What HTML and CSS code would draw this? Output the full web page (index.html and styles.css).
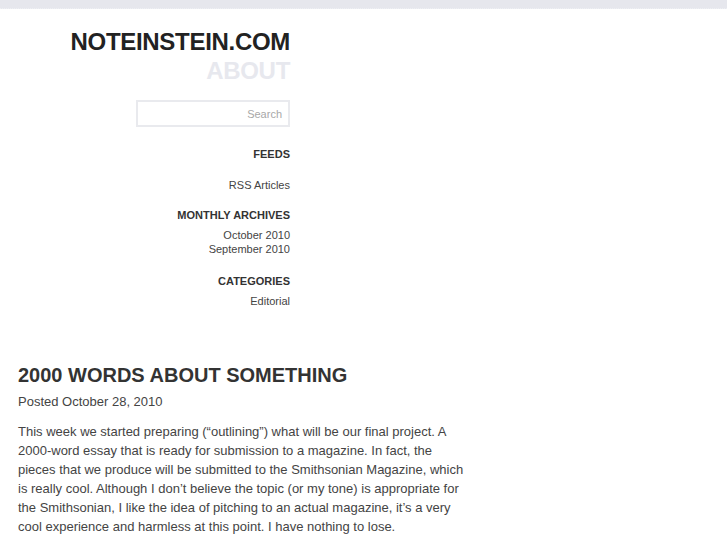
FILE: index.html
```html
<!DOCTYPE html>
<html>
<head>
<meta charset="utf-8">
<title>noteinstein.com</title>
<link rel="stylesheet" href="styles.css">
</head>
<body>
<div class="topbar"></div>
<aside class="sidebar">
  <h1 class="site-title">NOTEINSTEIN.COM</h1>
  <div class="about">ABOUT</div>
  <div class="search"><span class="search-ph">Search</span></div>
  <h3 class="sec feeds">FEEDS</h3>
  <ul class="list list-feeds"><li>RSS Articles</li></ul>
  <h3 class="sec archives">MONTHLY ARCHIVES</h3>
  <ul class="list list-tight"><li>October 2010</li><li>September 2010</li></ul>
  <h3 class="sec cats">CATEGORIES</h3>
  <ul class="list list-tight"><li>Editorial</li></ul>
</aside>
<main class="post">
  <h2 class="post-title">2000 WORDS ABOUT SOMETHING</h2>
  <div class="post-date">Posted October 28, 2010</div>
  <p class="post-body">This week we started preparing (“outlining”) what will be our final project. A 2000-word essay that is ready for submission to a magazine. In fact, the pieces that we produce will be submitted to the Smithsonian Magazine, which is really cool. Although I don’t believe the topic (or my tone) is appropriate for the Smithsonian, I like the idea of pitching to an actual magazine, it’s a very cool experience and harmless at this point. I have nothing to lose.</p>
</main>
</body>
</html>
```
FILE: styles.css
```css
html, body {
  margin: 0;
  padding: 0;
  background: #fff;
}
body {
  font-family: "Liberation Sans", Arial, sans-serif;
  color: #333;
}
.topbar {
  height: 8px;
  background: #e6e7ed;
  border-bottom: 1px dotted #eef0f4;
}
.sidebar {
  width: 290px;
  text-align: right;
}
.site-title {
  margin: 19px 0 0;
  font-size: 24px;
  line-height: 28px;
  font-weight: bold;
  color: #222;
  letter-spacing: -0.3px;
}
.about {
  margin-top: 1px;
  font-size: 24px;
  line-height: 28px;
  font-weight: bold;
  color: #e7e8ee;
  letter-spacing: -0.3px;
}
.search {
  margin: 15px 0 0 136px;
  height: 23px;
  border: 2px solid #e9eaee;
  display: flex;
  align-items: center;
  justify-content: flex-end;
  padding-right: 6px;
}
.search-ph {
  font-size: 11px;
  color: #a8a8a8;
}
.sec {
  margin: 0;
  font-size: 11px;
  line-height: 14px;
  font-weight: bold;
  color: #333;
}
.feeds { margin-top: 19.5px; }
.archives { margin-top: 16px; }
.cats { margin-top: 18px; }
.list {
  list-style: none;
  margin: 0;
  padding: 0;
  font-size: 11px;
  line-height: 14px;
  color: #444;
}
.list-feeds { margin-top: 17px; }
.list-tight { margin-top: 6px; }
.post {
  padding: 0 0 0 18px;
  margin-top: 55px;
  width: 452px;
}
.post-title {
  margin: 0;
  font-size: 20px;
  line-height: 24px;
  font-weight: bold;
  color: #333;
}
.post-date {
  margin-top: 5.5px;
  font-size: 13px;
  line-height: 19px;
  color: #444;
}
.post-body {
  margin: 11px 0 0;
  font-size: 13px;
  line-height: 19px;
  color: #444;
}
```
